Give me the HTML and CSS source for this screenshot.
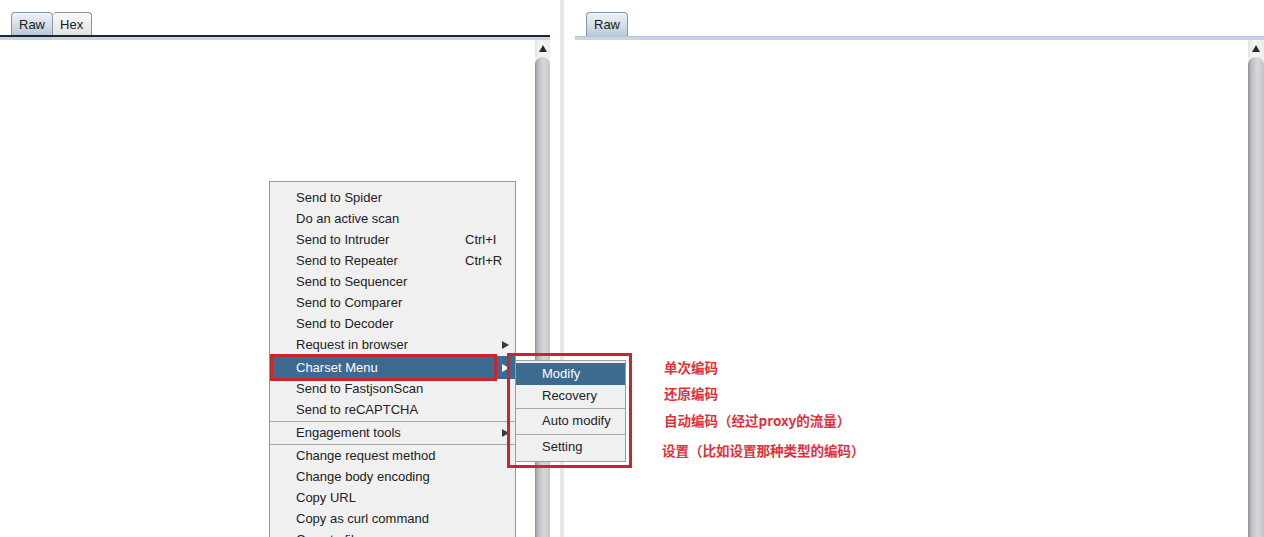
FILE: index.html
```html
<!DOCTYPE html>
<html lang="en">
<head>
<meta charset="utf-8">
<title>Message editor</title>
<link rel="stylesheet" href="styles.css">
</head>
<body>
<div class="workspace">
  <section class="pane pane-left">
    <div class="tabs">
      <span class="tab tab-active">Raw</span>
      <span class="tab">Hex</span>
    </div>
    <div class="rule-dark"></div>
    <div class="rule-light"></div>
    <div class="editor">
      <div class="editor-text"></div>
      <div class="scrollbar">
        <div class="scroll-btn"><span class="scroll-arrow"></span></div>
        <div class="scroll-thumb"></div>
      </div>
    </div>
  </section>

  <div class="splitter"></div>

  <section class="pane pane-right">
    <div class="tabs tabs-right">
      <span class="tab tab-active">Raw</span>
    </div>
    <div class="rule-band"></div>
    <div class="editor">
      <div class="editor-text"></div>
      <div class="scrollbar scrollbar-wide">
        <div class="scroll-btn"><span class="scroll-arrow"></span></div>
        <div class="scroll-thumb"></div>
      </div>
    </div>
  </section>
</div>

<ul class="context-menu">
  <li class="item"><span>Send to Spider</span></li>
  <li class="item"><span>Do an active scan</span></li>
  <li class="item"><span>Send to Intruder</span><span class="shortcut">Ctrl+I</span></li>
  <li class="item"><span>Send to Repeater</span><span class="shortcut">Ctrl+R</span></li>
  <li class="item"><span>Send to Sequencer</span></li>
  <li class="item"><span>Send to Comparer</span></li>
  <li class="item"><span>Send to Decoder</span></li>
  <li class="item"><span>Request in browser</span><span></span><span class="sub-arrow"></span></li>
  <li class="item item-open"><span>Charset Menu</span><span></span><span class="sub-arrow"></span></li>
  <li class="item"><span>Send to FastjsonScan</span></li>
  <li class="item"><span>Send to reCAPTCHA</span></li>
  <li class="separator"></li>
  <li class="item"><span>Engagement tools</span><span></span><span class="sub-arrow"></span></li>
  <li class="separator"></li>
  <li class="item"><span>Change request method</span></li>
  <li class="item"><span>Change body encoding</span></li>
  <li class="item"><span>Copy URL</span></li>
  <li class="item"><span>Copy as curl command</span></li>
  <li class="item"><span>Copy to file</span></li>
</ul>

<ul class="submenu">
  <li class="sub-item sub-item-active">Modify</li>
  <li class="sub-item">Recovery</li>
  <li class="sub-separator"></li>
  <li class="sub-item">Auto modify</li>
  <li class="sub-separator"></li>
  <li class="sub-item">Setting</li>
</ul>

<div class="callout callout-item"></div>
<div class="callout callout-submenu"></div>

<div class="notes">
  <p class="note note-1">单次编码</p>
  <p class="note note-2">还原编码</p>
  <p class="note note-3">自动编码（经过proxy的流量）</p>
  <p class="note note-4">设置（比如设置那种类型的编码）</p>
</div>
</body>
</html>
```

FILE: styles.css
```css
* {
  box-sizing: border-box;
}

html, body {
  margin: 0;
  padding: 0;
  background: #ffffff;
}

body {
  width: 1264px;
  height: 537px;
  overflow: hidden;
  position: relative;
  font-family: "Liberation Sans", Arial, sans-serif;
  font-size: 13px;
  color: #1b1b1b;
}

/* two editor panes separated by a thin splitter */
.workspace {
  display: flex;
  height: 537px;
}

.pane {
  display: flex;
  flex-direction: column;
  padding-top: 12px;
}

.pane-left {
  width: 550px;
}

.pane-right {
  flex: 1;
}

.splitter {
  width: 4px;
  margin: 0 11px 0 10px;
  background: #e8e8e8;
}

/* tab strip */
.tabs {
  display: flex;
  align-items: flex-end;
  height: 23px;
  padding-left: 11px;
}

.tabs-right {
  height: 24px;
  padding-left: 11px;
}

.tab {
  display: flex;
  align-items: center;
  height: 23px;
  padding: 0 8px 0 7px;
  border: 1px solid #8e9399;
  border-bottom: none;
  border-radius: 4px 4px 0 0;
  background: linear-gradient(#fafafa, #e2e2e2);
  color: #1a1a1a;
}

.tab + .tab {
  border-left: none;
}

.tab-active {
  padding: 0 7px;
  background: linear-gradient(#eef2f6 0%, #d3dde8 55%, #b7c8da 100%);
  border-color: #8797a8;
}

.tabs-right .tab {
  height: 24px;
}

.rule-dark {
  height: 2px;
  background: #1e2632;
}

.rule-light {
  height: 3px;
  background: #c8d4e1;
}

.rule-band {
  height: 4px;
  border-top: 1px solid #b3c1d0;
  background: #c9d5e2;
}

/* editor body with vertical scrollbar */
.editor {
  flex: 1;
  display: flex;
  background: #ffffff;
}

.editor-text {
  flex: 1;
}

.scrollbar {
  width: 15px;
  display: flex;
  flex-direction: column;
  background: #f2f2f2;
}

.scrollbar-wide {
  width: 16px;
}

.scroll-btn {
  height: 17px;
  display: flex;
  justify-content: center;
  align-items: center;
  background: linear-gradient(to right, #e4e4e4, #f6f6f6 40%, #ececec);
}

.scroll-arrow {
  width: 0;
  height: 0;
  border-left: 4px solid transparent;
  border-right: 4px solid transparent;
  border-bottom: 7px solid #2a2a2a;
}

.scroll-thumb {
  flex: 1;
  border-radius: 8px 8px 0 0;
  background: linear-gradient(to right, #8c8f94 0%, #b9bcc0 20%, #d4d6d9 55%, #cfd2d5 80%, #bfc2c6 100%);
}

/* popup context menu */
.context-menu {
  position: absolute;
  left: 269px;
  top: 181px;
  width: 247px;
  height: 380px;
  margin: 0;
  padding: 5px 0 0;
  list-style: none;
  background: #f0f0f0;
  border: 1px solid #989898;
  color: #222222;
}

.item {
  display: grid;
  grid-template-columns: 169px 1fr 16px;
  align-items: center;
  height: 21px;
  padding-left: 26px;
  white-space: nowrap;
}

.item-open {
  height: 23px;
  margin-top: 1px;
  margin-bottom: -1px;
  background: #3d6a8f;
  color: #ffffff;
}

.shortcut {
  grid-column: 2;
}

.sub-arrow {
  grid-column: 3;
  width: 0;
  height: 0;
  margin-left: 3px;
  border-top: 4px solid transparent;
  border-bottom: 4px solid transparent;
  border-left: 7px solid #3a3a3a;
}

.item-open .sub-arrow {
  border-left-color: #ffffff;
}

.separator {
  height: 2px;
  padding-top: 1px;
}

.separator::before {
  content: "";
  display: block;
  height: 1px;
  background: #a8a8a8;
}

/* charset submenu */
.submenu {
  position: absolute;
  left: 515px;
  top: 360px;
  width: 111px;
  margin: 0;
  padding: 2px 0 3px;
  list-style: none;
  background: #f0f0f0;
  border: 1px solid #9c9c9c;
  color: #222222;
}

.sub-item {
  height: 22px;
  line-height: 22px;
  padding-left: 26px;
  white-space: nowrap;
}

.sub-item-active {
  background: #3d6a8f;
  color: #ffffff;
}

.sub-item-active + .sub-item {
  height: 21px;
}

.sub-separator {
  height: 4px;
  padding-top: 2px;
}

.sub-separator::before {
  content: "";
  display: block;
  height: 1px;
  background: #a8a8a8;
}

/* red highlight frames */
.callout {
  position: absolute;
  border: 3px solid #c7262f;
}

.callout-item {
  left: 270px;
  top: 354px;
  width: 227px;
  height: 27px;
}

.callout-submenu {
  left: 507px;
  top: 353px;
  width: 125px;
  height: 115px;
}

/* side notes */
.notes {
  position: absolute;
  left: 662px;
  top: 357px;
  display: flex;
  flex-direction: column;
}

.note {
  margin: 0;
  height: 20px;
  line-height: 20px;
  font-family: "Noto Sans CJK SC", "Noto Sans", sans-serif;
  font-weight: 700;
  font-size: 13.5px;
  color: #e0303a;
  white-space: nowrap;
}

.note-1,
.note-2,
.note-3 {
  padding-left: 2px;
}

.note-2 {
  margin-top: 6px;
}

.note-3 {
  margin-top: 7px;
}

.note-4 {
  margin-top: 10px;
}
```
